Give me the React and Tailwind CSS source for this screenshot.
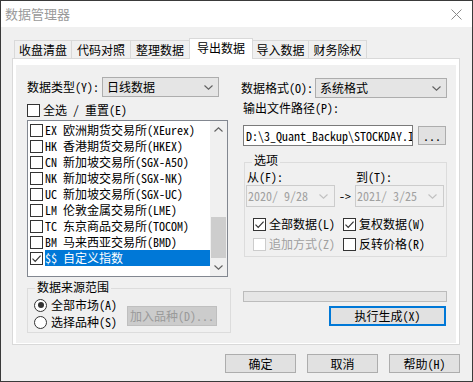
import React from "react";

const Chevron = ({ color = "#606060", up = false }) => (
  <svg width="9" height="5" viewBox="0 0 9 5">
    <path
      d={up ? "M0.5 4.5 L4.5 0.8 L8.5 4.5" : "M0.5 0.5 L4.5 4.2 L8.5 0.5"}
      fill="none"
      stroke={color}
      strokeWidth="1.1"
    />
  </svg>
);

const Check = ({ checked, disabled }) => (
  <span
    className={`w-[13px] h-[13px] border flex items-center justify-center shrink-0 bg-white ${
      disabled ? "border-[#cccccc]" : "border-[#333333]"
    }`}
  >
    {checked && (
      <svg width="11" height="11" viewBox="0 0 11 11">
        <path d="M1.5 5.6 L4.2 8.3 L9.6 2.6" fill="none" stroke="#333333" strokeWidth="1.2" />
      </svg>
    )}
  </span>
);

const Radio = ({ checked }) => (
  <span className="w-[13px] h-[13px] rounded-full border border-[#333333] bg-white flex items-center justify-center shrink-0">
    {checked && <span className="w-[6px] h-[6px] rounded-full bg-[#333333]" />}
  </span>
);

const tabs = [
  { t: "收盘清盘", w: "w-[58px]" },
  { t: "代码对照", w: "w-[60px]" },
  { t: "整理数据", w: "w-[60px]" },
  { t: "导出数据", w: "w-[64px]", sel: true },
  { t: "导入数据", w: "w-[57px]" },
  { t: "财务除权", w: "w-[59px]" },
];

const rows = [
  "EX 欧洲期货交易所(XEurex)",
  "HK 香港期货交易所(HKEX)",
  "CN 新加坡交易所(SGX-A50)",
  "NK 新加坡交易所(SGX-NK)",
  "UC 新加坡交易所(SGX-UC)",
  "LM 伦敦金属交易所(LME)",
  "TC 东京商品交易所(TOCOM)",
  "BM 马来西亚交易所(BMD)",
];

export default function App() {
  return (
    <div className="w-[473px] h-[382px] border border-[#3a3a3a] flex flex-col bg-[#f0f0f0] text-[12px] leading-[14px] text-black font-['Noto_Sans_Mono_CJK_SC','Noto_Sans_CJK_SC',sans-serif] overflow-hidden">
      {/* title bar */}
      <div className="h-[26px] shrink-0 bg-white flex items-center justify-between pl-[4px] pr-[10px]">
        <span className="text-[13px] text-[#9a9a9a] font-['Noto_Sans_CJK_SC',sans-serif]">数据管理器</span>
        <svg width="11" height="11" viewBox="0 0 11 11">
          <path d="M0.5 0.5 L10.5 10.5 M10.5 0.5 L0.5 10.5" stroke="#8a8a8a" strokeWidth="1" />
        </svg>
      </div>

      <div className="flex-1 flex flex-col pl-[11px] pr-[12px] pb-[8px]">
        {/* tabs */}
        <div className="mt-[11px] h-[20px] flex items-end pl-[2px]">
          {tabs.map((tb) => (
            <div
              key={tb.t}
              className={`${tb.w} flex items-center justify-center border-t border-l border-r border-[#d9d9d9] -mr-[1px] ${
                tb.sel ? "h-[21px] bg-white relative z-10 -mb-[1px] pb-[2px]" : "h-[18px] bg-[#f0f0f0]"
              }`}
            >
              {tb.t}
            </div>
          ))}
        </div>

        {/* panel */}
        <div className="h-[287px] border border-[#d9d9d9] bg-white pt-[6px] pl-[3px] pr-[3px] pb-[1px] flex">
          <div className="flex-1 bg-[#f0f0f0] flex pl-[11px] gap-[10px]">
            {/* left column */}
            <div className="w-[204px] flex flex-col">
              <div className="mt-[12px] h-[20px] flex items-center">
                <span className="w-[75px]">数据类型(Y):</span>
                <div className="w-[117px] h-[20px] border border-[#adadad] bg-[#e5e5e5] flex items-center justify-between pl-[4px] pr-[5px]">
                  <span>日线数据</span>
                  <Chevron />
                </div>
              </div>
              <div className="mt-[6px] h-[14px] flex items-center gap-[3px]">
                <Check />
                <span>全选 / 重置(E)</span>
              </div>
              <div className="mt-[3px] h-[157px] w-[201px] border border-[#828790] bg-white flex">
                <div className="flex-1 pt-[1px] flex flex-col">
                  {rows.map((r) => (
                    <div key={r} className="h-[16px] flex items-center pl-[2px] gap-[2px] whitespace-nowrap">
                      <Check />
                      <span>{r}</span>
                    </div>
                  ))}
                  <div className="h-[16px] flex items-center pl-[2px] gap-[2px] whitespace-nowrap">
                    <Check checked />
                    <span className="flex-1 h-[16px] leading-[16px] bg-[#0078d7] text-white">$$ 自定义指数</span>
                  </div>
                </div>
                <div className="w-[17px] bg-[#f0f0f0] flex flex-col">
                  <div className="h-[17px] flex items-center justify-center">
                    <Chevron up />
                  </div>
                  <div className="flex-1">
                    <div className="mt-[79px] h-[41px] mx-[1px] bg-[#cdcdcd]" />
                  </div>
                  <div className="h-[17px] flex items-center justify-center">
                    <Chevron />
                  </div>
                </div>
              </div>
              <div className="mt-[11px] h-[45px] border border-[#dcdcdc] relative">
                <span className="absolute -top-[9px] left-[7px] px-[2px] bg-[#f0f0f0]">数据来源范围</span>
                <div className="pt-[8px] flex">
                  <div className="w-[99px] pl-[6px] flex flex-col gap-[1px]">
                    <div className="h-[16px] flex items-center gap-[4px]">
                      <Radio checked />
                      <span>全部市场(A)</span>
                    </div>
                    <div className="h-[16px] flex items-center gap-[4px]">
                      <Radio />
                      <span>选择品种(S)</span>
                    </div>
                  </div>
                  <div className="mt-[9px] w-[90px] h-[20px] border border-[#bfbfbf] bg-[#cccccc] text-[#9a9a9a] flex items-center justify-center">
                    加入品种(D)...
                  </div>
                </div>
              </div>
            </div>

            {/* right column */}
            <div className="w-[206px] flex flex-col">
              <div className="mt-[13px] h-[20px] flex items-center">
                <span className="w-[74px]">数据格式(O):</span>
                <div className="w-[132px] h-[20px] border border-[#adadad] bg-[#e5e5e5] flex items-center justify-between pl-[4px] pr-[5px]">
                  <span>系统格式</span>
                  <Chevron />
                </div>
              </div>
              <div className="mt-[3px] h-[14px] ml-[2px] flex items-center">输出文件路径(P):</div>
              <div className="mt-[10px] h-[21px] flex items-center ml-[2px] gap-[5px]">
                <div className="w-[170px] h-[21px] border border-[#7a7a7a] bg-white pl-[2px] flex items-center overflow-hidden whitespace-nowrap">
                  {"D:\\3_Quant_Backup\\STOCKDAY.I"}
                </div>
                <div className="w-[28px] h-[19px] border border-[#adadad] bg-[#e1e1e1] flex items-center justify-center">
                  ...
                </div>
              </div>

              {/* options group */}
              <div className="mt-[16px] ml-[3px] w-[203px] h-[95px] border border-[#dcdcdc] relative px-[1px] pt-[7px]">
                <span className="absolute -top-[10px] left-[7px] px-[2px] bg-[#f0f0f0]">选项</span>
                <div className="h-[14px] flex items-center">
                  <span className="w-[109px] pl-[1px]">从(F):</span>
                  <span className="pl-[1px]">到(T):</span>
                </div>
                <div className="mt-[1px] h-[22px] flex items-center">
                  <div className="w-[89px] h-[22px] border border-[#cccccc] bg-[#f0f0f0] text-[#a0a0a0] flex items-center justify-between pl-[1px] pr-[6px] whitespace-pre">
                    <span>2020/ 9/28</span>
                    <Chevron color="#c0c0c0" />
                  </div>
                  <span className="w-[20px] text-center">-&gt;</span>
                  <div className="w-[89px] h-[22px] border border-[#cccccc] bg-[#f0f0f0] text-[#a0a0a0] flex items-center justify-between pl-[1px] pr-[6px] whitespace-pre">
                    <span>2021/ 3/25</span>
                    <Chevron color="#c0c0c0" />
                  </div>
                </div>
                <div className="mt-[10px] h-[14px] flex items-center pl-[7px]">
                  <div className="w-[90px] flex items-center gap-[3px]">
                    <Check checked />
                    <span>全部数据(L)</span>
                  </div>
                  <div className="flex items-center gap-[3px]">
                    <Check checked />
                    <span>复权数据(W)</span>
                  </div>
                </div>
                <div className="mt-[6px] h-[14px] flex items-center pl-[7px]">
                  <div className="w-[90px] flex items-center gap-[3px] text-[#a0a0a0]">
                    <Check disabled />
                    <span>追加方式(Z)</span>
                  </div>
                  <div className="flex items-center gap-[3px]">
                    <Check />
                    <span>反转价格(R)</span>
                  </div>
                </div>
              </div>

              <div className="mt-[34px] ml-[2px] w-[204px] h-[11px] border border-[#bcbcbc] bg-[#e6e6e6]" />
              <div className="mt-[4px] ml-[88px] w-[117px] h-[20px] border-2 border-[#0078d7] bg-[#e1e1e1] flex items-center justify-center">
                执行生成(X)
              </div>
            </div>
          </div>
        </div>

        {/* bottom buttons */}
        <div className="mt-[9px] h-[19px] flex justify-end gap-[11px]">
          {["确定", "取消", "帮助(H)"].map((b) => (
            <div key={b} className="w-[71px] h-[19px] border border-[#adadad] bg-[#e1e1e1] flex items-center justify-center">
              {b}
            </div>
          ))}
        </div>
      </div>
    </div>
  );
}
